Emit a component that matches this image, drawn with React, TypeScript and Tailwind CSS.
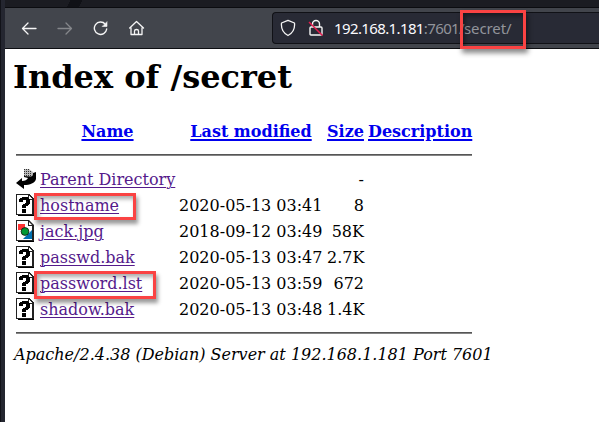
import type { ReactNode } from "react";

const columns = "grid grid-cols-[20px_135px_144px_37px_104px] gap-x-1";

function UnknownIcon() {
  return (
    <svg width="20" height="22" viewBox="0 0 20 22" shapeRendering="crispEdges">
      <path d="M2 22H18V6H16V20H2Z" fill="#000" />
      <path d="M0 0H13L18 5V21H0Z" fill="#222" />
      <path d="M1 1H12V6H16V20H1Z" fill="#fff" />
      <path d="M13 2L16 5H13Z" fill="#fff" />
      <path d="M3 5H4V4H6V3H12V4H13V5H14V10H13V11H12V12H10V14H6V11H7V10H9V9H10V6H7V8H3ZM6 15H10V19H6Z" fill="#000" />
    </svg>
  );
}

function ImageIcon() {
  return (
    <svg width="20" height="22" viewBox="0 0 20 22">
      <path d="M2 22H18V6H16V20H2Z" fill="#000" />
      <path d="M0 0H13L18 5V21H0Z" fill="#222" />
      <path d="M1 1H12V6H16V20H1Z" fill="#fff" />
      <path d="M13 2L16 5H13Z" fill="#fff" />
      <path d="M2 4H9V10H2Z" fill="#ff3333" />
      <path d="M16 10V19H7Z" fill="#0070b0" />
      <circle cx="9" cy="11.5" r="3.9" fill="#009933" stroke="#111" strokeWidth=".8" />
    </svg>
  );
}

function BackIcon() {
  return (
    <svg width="20" height="22" viewBox="0 0 20 22">
      <path d="M8 1H13L17 4V9L8 8Z" fill="#bbb" />
      <path d="M8.5 1V8M10.5 1V8M12.5 1V8M14.5 3V9" stroke="#333" strokeWidth="1" strokeDasharray="1 1" />
      <path d="M17 5L20 4V11C19 15 14 17 8 17V21L0 15L6 10V13C9 13 11 12 12 10L8 9V8L15 8.5C17 8 17 7 17 5Z" fill="#000" />
    </svg>
  );
}

function Rule() {
  return <div className="h-[2px] w-[456px] border-t border-t-[#555] bg-[#858585]" />;
}

function Heading({ children }: { children: ReactNode }) {
  return <a className="whitespace-nowrap text-center font-bold text-[#0000ee] underline decoration-2 underline-offset-2">{children}</a>;
}

const files = [
  { icon: <BackIcon />, name: "Parent Directory", date: "", size: "-" },
  { icon: <UnknownIcon />, name: "hostname", date: "2020-05-13 03:41", size: "8" },
  { icon: <ImageIcon />, name: "jack.jpg", date: "2018-09-12 03:49", size: "58K" },
  { icon: <UnknownIcon />, name: "passwd.bak", date: "2020-05-13 03:47", size: "2.7K" },
  { icon: <UnknownIcon />, name: "password.lst", date: "2020-05-13 03:59", size: "672" },
  { icon: <UnknownIcon />, name: "shadow.bak", date: "2020-05-13 03:48", size: "1.4K" },
];

function Toolbar() {
  return (
    <div className="flex h-[41px] items-center border-b border-[#0d0e12] bg-[#42454c] pl-4 text-[#f5f5f5]">
      <svg width="16" height="16" viewBox="0 0 16 16" fill="none" stroke="currentColor" strokeWidth="1.3" strokeLinecap="round" strokeLinejoin="round">
        <path d="M15 8.5H1.5M7 3L1.5 8.5L7 14" />
      </svg>
      <svg className="ml-5 text-[#85878b]" width="16" height="16" viewBox="0 0 16 16" fill="none" stroke="currentColor" strokeWidth="1.3" strokeLinecap="round" strokeLinejoin="round">
        <path d="M1 8.5H14.5M9 3L14.5 8.5L9 14" />
      </svg>
      <svg className="ml-5" width="16" height="16" viewBox="0 0 16 16" fill="none" stroke="currentColor" strokeWidth="1.4" strokeLinecap="round">
        <path d="M12.3 4.2A6.2 6.2 0 1 0 13.7 9" />
        <path d="M14 2V6.5H9.5Z" fill="currentColor" strokeWidth=".6" />
      </svg>
      <svg className="ml-5" width="16" height="16" viewBox="0 0 16 16" fill="none" stroke="currentColor" strokeWidth="1.3" strokeLinecap="round" strokeLinejoin="round">
        <path d="M.7 8L7.5 1.5L14.5 8M2 7.5V14.5H13V7.5M5.5 14V11Q5.5 9.5 7.5 9.5Q9.5 9.5 9.5 11V14" />
      </svg>
      <div className="ml-[127px] flex h-8 flex-1 items-center rounded-l border border-r-0 border-[#101116] bg-[#282a35] pl-[7px]">
        <svg width="16" height="18" viewBox="0 0 16 18" fill="none" stroke="currentColor" strokeWidth="1.3" strokeLinejoin="round">
          <path d="M8 1.3L14.5 4C15 9 13 14 8 16.5C3 14 1 9 1.5 4Z" />
        </svg>
        <svg className="ml-3" width="16" height="18" viewBox="0 0 16 18" fill="none" stroke="currentColor" strokeWidth="1.4">
          <path d="M4.5 8V5A3.5 3.5 0 0 1 11.5 5V8M3 8H13Q14 8 14 9V15Q14 16 13 16H3Q2 16 2 15V9Q2 8 3 8Z" />
          <path d="M1 3L14.5 16.5" stroke="#e51b4d" strokeWidth="1.5" />
        </svg>
        <div className="ml-2.5 whitespace-pre font-['Noto_Sans',sans-serif] text-[15px] tracking-[-0.62px] text-[#92949b]">
          <span className="text-[#fbfbfe]">192.168.1.181</span>:7601/<span className="tracking-[-0.1px]">secret/</span>
        </div>
      </div>
    </div>
  );
}

export default function App() {
  return (
    <div className="relative flex h-[422px] w-[599px] overflow-hidden bg-white">
      <div className="w-[5px] shrink-0 border-l border-[#111218] bg-[#242630]" />
      <div className="flex min-w-0 flex-1 flex-col">
        <div className="h-2 border-b border-[#0b0c10] bg-[linear-gradient(120deg,#1b1c22_0_11%,#101116_11%_13%,#1b1c22_13%)]" />
        <Toolbar />
        <main className="flex flex-1 flex-col pl-2 font-['DejaVu_Serif',serif] text-base leading-[19px] text-black">
          <h1 className="mt-[9px] text-[32px] font-bold leading-[38px]">Index of /secret</h1>
          <div className="ml-[3px] mt-[26px] w-[456px]">
            <div className={columns}>
              <span />
              <Heading>Name</Heading>
              <Heading>Last modified</Heading>
              <Heading>Size</Heading>
              <Heading>Description</Heading>
            </div>
            <div className="mb-[10px] mt-[13px]"><Rule /></div>
            {files.map((file) => (
              <div key={file.name} className={`${columns} h-[26px] items-center whitespace-nowrap`}>
                {file.icon}
                <a className="text-[#551a8b] underline decoration-1 underline-offset-2">{file.name}</a>
                <span>{file.date}</span>
                <span className="text-right">{file.size}</span>
                <span />
              </div>
            ))}
            <div className="mt-[10px]"><Rule /></div>
          </div>
          <address className="ml-px mt-[11px] italic">Apache/2.4.38 (Debian) Server at 192.168.1.181 Port 7601</address>
        </main>
      </div>
      <div className="absolute left-[460px] top-[10px] h-[39px] w-[66px] border-3 border-[#fa4343] shadow-[2px_4px_5px_#0007,inset_2px_3px_4px_#0006]" />
      <div className="absolute left-[34px] top-[193px] h-[27px] w-[102px] border-3 border-[#fa4343] shadow-[2px_4px_4px_#0006,inset_2px_3px_4px_#0005]" />
      <div className="absolute left-[34px] top-[271px] h-[28px] w-[122px] border-3 border-[#fa4343] shadow-[2px_4px_4px_#0006,inset_2px_3px_4px_#0005]" />
    </div>
  );
}
